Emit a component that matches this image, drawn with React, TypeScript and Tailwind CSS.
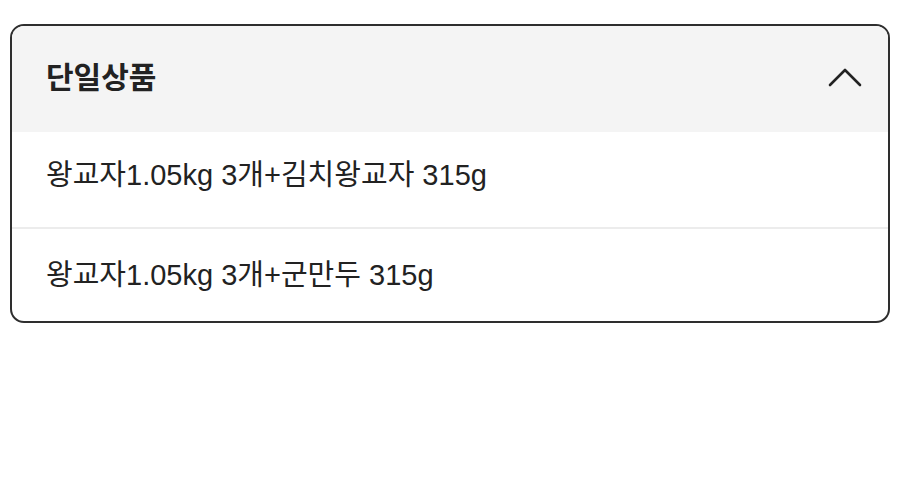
import { useState } from 'react';

const options = ['왕교자1.05kg 3개+김치왕교자 315g', '왕교자1.05kg 3개+군만두 315g'];

export default function App() {
	const [open, setOpen] = useState(true);

	return (
		<div className="min-h-screen bg-white px-[10px] pt-[24px] font-['Liberation_Sans','Noto_Sans_CJK_KR',sans-serif] text-[#222]">
			<div className="overflow-hidden rounded-[14px] border-2 border-[#2e2e2e]">
				<button
					type="button"
					onClick={() => setOpen(!open)}
					className="flex h-[106px] w-full items-center justify-between bg-[#f4f4f4] pl-[34px] pr-[26px]"
				>
					<span className="pb-[2px] text-[30px] font-bold leading-none">단일상품</span>
					<svg width="34" height="20" viewBox="0 0 34 20" fill="none" className={`mb-[4px] ${open ? '' : 'rotate-180'}`}>
						<path d="M2 18 L17 3 L32 18" stroke="#222" strokeWidth="2.6" strokeLinecap="round" strokeLinejoin="round" />
					</svg>
				</button>
				{open && (
					<ul>
						<li className="flex h-[95px] items-center pb-[8px] pl-[34px] text-[29px] leading-none">{options[0]}</li>
						<li className="flex h-[94px] items-center border-t-2 border-[#ececec] pl-[34px] text-[29px] leading-none">
							{options[1]}
						</li>
					</ul>
				)}
			</div>
		</div>
	);
}
